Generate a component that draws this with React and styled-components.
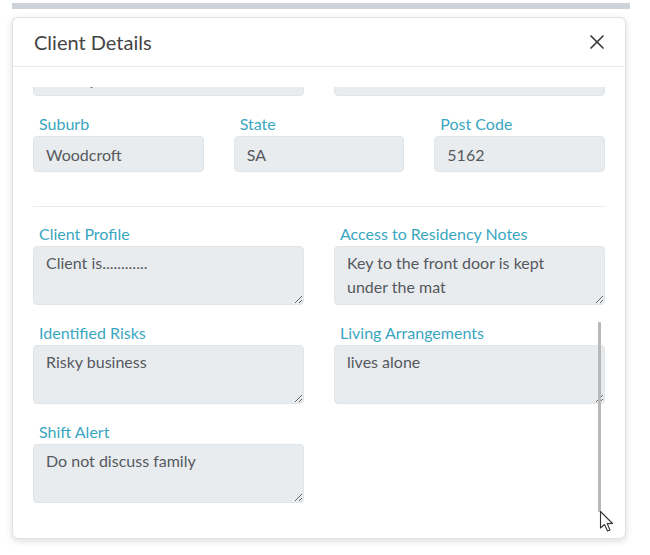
import React from 'react';
import styled, { createGlobalStyle } from 'styled-components';

const GlobalStyle = createGlobalStyle`
  html, body {
    margin: 0;
    padding: 0;
    background: #ffffff;
  }
  body {
    font-family: Lato, "Open Sans", "Liberation Sans", sans-serif;
  }
`;

const notes = [
  { label: 'Client Profile', value: 'Client is............' },
  { label: 'Access to Residency Notes', value: 'Key to the front door is kept under the mat' },
  { label: 'Identified Risks', value: 'Risky business' },
  { label: 'Living Arrangements', value: 'lives alone' },
  { label: 'Shift Alert', value: 'Do not discuss family' },
];

function CloseIcon() {
  return (
    <svg width="16" height="16" viewBox="0 0 16 16">
      <path d="M2 2 L14 14 M14 2 L2 14" stroke="#3a3a3a" strokeWidth="1.7" strokeLinecap="round" />
    </svg>
  );
}

function Pointer() {
  return (
    <svg width="18" height="24" viewBox="0 0 18 24">
      <path
        d="M1.5 1.5 L1.5 18 L5.5 14.5 L8.5 21 L11 20 L8.2 13.6 L13.5 13.5 Z"
        fill="#ffffff"
        stroke="#333333"
        strokeWidth="1.1"
        strokeLinejoin="round"
      />
    </svg>
  );
}

function App() {
  return (
    <Page>
      <GlobalStyle />
      <TopBar />
      <Modal>
        <Header>
          <Title>Client Details</Title>
          <CloseButton aria-label="Close">
            <CloseIcon />
          </CloseButton>
        </Header>

        <Body>
          <ClippedRow>
            <Input $clipped value="12 Hayward Cres" readOnly />
            <Input $clipped value="" readOnly />
          </ClippedRow>

          <AddressGrid>
            <Field>
              <Label>Suburb</Label>
              <Input value="Woodcroft" readOnly />
            </Field>
            <Field>
              <Label>State</Label>
              <Input value="SA" readOnly />
            </Field>
            <Field>
              <Label>Post Code</Label>
              <Input value="5162" readOnly />
            </Field>
          </AddressGrid>

          <Divider />

          <NotesGrid>
            {notes.map((n) => (
              <Field key={n.label}>
                <Label>{n.label}</Label>
                <TextArea value={n.value} readOnly />
              </Field>
            ))}
          </NotesGrid>
        </Body>

        <ScrollThumb />
        <CursorSpot>
          <Pointer />
        </CursorSpot>
      </Modal>
    </Page>
  );
}

const Page = styled.div`
  width: 650px;
  height: 555px;
  padding: 3px 0 0 12px;
  box-sizing: border-box;
  overflow: hidden;
`;

const TopBar = styled.div`
  width: 618px;
  height: 6px;
  background: #cdd3d8;
`;

const Modal = styled.div`
  position: relative;
  margin-top: 8px;
  width: 614px;
  height: 522px;
  box-sizing: border-box;
  background: #ffffff;
  border: 1px solid #e2e2e2;
  border-radius: 6px;
  box-shadow: 0 2px 7px rgba(0, 0, 0, 0.14);
  overflow: hidden;
`;

const Header = styled.div`
  height: 49px;
  box-sizing: border-box;
  display: flex;
  align-items: center;
  justify-content: space-between;
  padding: 0 20px 0 21px;
  border-bottom: 1px solid #e6e8ea;
`;

const Title = styled.h5`
  margin: 0;
  font-size: 20px;
  font-weight: 400;
  color: #444444;
`;

const CloseButton = styled.button`
  display: flex;
  align-items: center;
  justify-content: center;
  padding: 0;
  border: none;
  background: transparent;
  cursor: pointer;
`;

const Body = styled.div`
  padding: 20px 20px 0 20px;
`;

const ClippedRow = styled.div`
  display: grid;
  grid-template-columns: 1fr 1fr;
  column-gap: 30px;
  height: 9px;
  overflow: hidden;
`;

const AddressGrid = styled.div`
  display: grid;
  grid-template-columns: repeat(3, 1fr);
  column-gap: 30px;
  margin-top: 20px;
`;

const NotesGrid = styled.div`
  display: grid;
  grid-template-columns: 1fr 1fr;
  column-gap: 30px;
  row-gap: 20px;
  margin-top: 19px;
`;

const Field = styled.div`
  display: flex;
  flex-direction: column;
`;

const Label = styled.label`
  height: 20px;
  line-height: 16px;
  padding-left: 6px;
  box-sizing: border-box;
  font-size: 16px;
  color: #3aa6bf;
`;

const Input = styled.input`
  height: 36px;
  width: 100%;
  box-sizing: border-box;
  margin-top: ${(p) => (p.$clipped ? '-27px' : '0')};
  padding: 0 12px;
  font-family: inherit;
  font-size: 16px;
  color: #55595e;
  background: #e9ecef;
  border: 1px solid #e2e5e8;
  border-radius: 4px;
  outline: none;
`;

const Divider = styled.hr`
  margin: 34px 0 0 0;
  border: none;
  border-top: 1px solid #e9ecef;
`;

const TextArea = styled.textarea`
  height: 59px;
  width: 100%;
  box-sizing: border-box;
  padding: 4px 24px 4px 12px;
  font-family: inherit;
  font-size: 16px;
  line-height: 24px;
  color: #55595e;
  background: #e9ecef;
  border: 1px solid #e2e5e8;
  border-radius: 4px;
  resize: vertical;
  outline: none;
  overflow: hidden;
`;

const ScrollThumb = styled.div`
  position: absolute;
  left: 585px;
  top: 304px;
  width: 3px;
  height: 190px;
  background: #b8b8b8;
  border-radius: 1px;
`;

const CursorSpot = styled.div`
  position: absolute;
  left: 586px;
  top: 492px;
`;

export default App;
